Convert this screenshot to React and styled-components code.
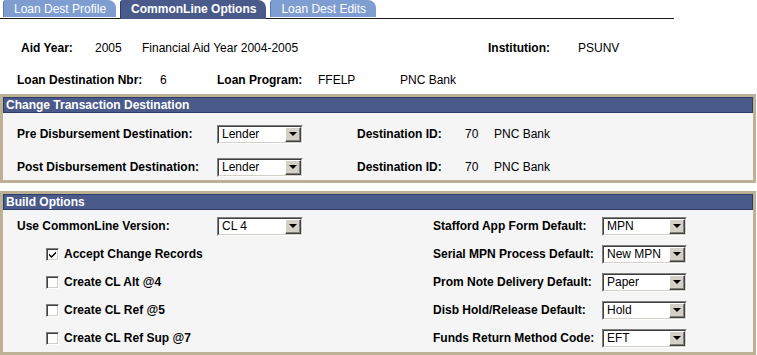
import React from "react";
import styled, { createGlobalStyle } from "styled-components";

const Global = createGlobalStyle`
  html, body { margin: 0; padding: 0; background: #fff; }
  body { font-family: "Liberation Sans", Arial, sans-serif; font-size: 12px; color: #000; }
`;

const Page = styled.div`
  width: 757px;
  height: 355px;
  overflow: hidden;
  display: flex;
  flex-direction: column;
`;

const TabBar = styled.div`
  display: flex;
  align-items: flex-end;
  gap: 4px;
  width: 674px;
  height: 19px;
  padding-left: 3px;
  box-sizing: border-box;
  border-bottom: 1px solid #1a1a1a;
`;

const Tab = styled.div`
  height: ${(p) => (p.$active ? "19px" : "17px")};
  margin-bottom: ${(p) => (p.$active ? "-1px" : "1px")};
  padding: 0 10px;
  display: flex;
  align-items: center;
  box-sizing: border-box;
  border-radius: 3px 8px 0 0;
  border-left: 1px solid ${(p) => (p.$active ? "#2f3d6c" : "#5f7cae")};
  background: ${(p) => (p.$active ? "#4a5a8b" : "#7e9dd0")};
  color: #fff;
  font-weight: ${(p) => (p.$active ? "bold" : "normal")};
  white-space: nowrap;
  padding-bottom: ${(p) => (p.$active ? "2px" : "0")};
`;

const Info = styled.div`
  display: flex;
  flex-direction: column;
  gap: 12px;
  margin-top: 19px;
`;

const InfoRow = styled.div`
  display: flex;
  height: 20px;
  align-items: center;
  padding-left: ${(p) => p.$pad}px;
`;

const Cell = styled.div`
  flex: none;
  width: ${(p) => (p.$w ? `${p.$w}px` : "auto")};
  font-weight: ${(p) => (p.$label ? "bold" : "normal")};
  white-space: nowrap;
`;

const Group = styled.section`
  margin-top: ${(p) => p.$top}px;
  width: 756px;
  box-sizing: border-box;
  border: 3px solid #bcb192;
  background: #f5f5f5;
`;

const GroupHeader = styled.div`
  height: 16px;
  box-sizing: border-box;
  background: #4a5a8b;
  border: 1px solid #2d3b68;
  color: #fff;
  font-weight: bold;
  line-height: 14px;
  padding-left: 2px;
`;

const GroupBody = styled.div`
  display: flex;
  flex-direction: column;
  gap: ${(p) => p.$gap}px;
  padding: ${(p) => p.$pt}px 0 ${(p) => p.$pb}px 14px;
`;

const Row = styled.div`
  display: flex;
  align-items: center;
  height: 20px;
`;

const Columns = styled.div`
  display: flex;
  padding: 6px 0 4px 14px;
`;

const Column = styled.div`
  display: flex;
  flex-direction: column;
  gap: 8px;
  width: ${(p) => (p.$w ? `${p.$w}px` : "auto")};
`;

const SelectBox = styled.div`
  flex: none;
  width: ${(p) => p.$w}px;
  height: 19px;
  box-sizing: border-box;
  border-top: 1px solid #808080;
  border-left: 1px solid #808080;
  border-right: 1px solid #ffffff;
  border-bottom: 1px solid #ffffff;
  display: flex;
`;

const SelectInner = styled.div`
  flex: 1;
  display: flex;
  align-items: center;
  border-top: 1px solid #404040;
  border-left: 1px solid #404040;
  border-right: 1px solid #d4d0c8;
  border-bottom: 1px solid #d4d0c8;
  background: #fff;
  padding-left: 3px;
`;

const SelectText = styled.span`
  flex: 1;
  white-space: nowrap;
`;

const DropBtn = styled.div`
  width: 16px;
  height: 15px;
  box-sizing: border-box;
  background: #d4d0c8;
  border-top: 1px solid #ffffff;
  border-left: 1px solid #ffffff;
  border-right: 1px solid #404040;
  border-bottom: 1px solid #404040;
  display: flex;
  align-items: center;
  justify-content: center;
  box-shadow: inset -1px -1px 0 #808080;
`;

const Arrow = styled.div`
  width: 0;
  height: 0;
  border-left: 4px solid transparent;
  border-right: 4px solid transparent;
  border-top: 4px solid #000;
  margin: 0 1px 1px 0;
`;

const CheckLine = styled.label`
  display: flex;
  align-items: center;
  height: 20px;
  padding-left: ${(p) => p.$indent}px;
  font-weight: bold;
  white-space: nowrap;
`;

const CheckBox = styled.span`
  width: 13px;
  height: 13px;
  box-sizing: border-box;
  border-top: 1px solid #808080;
  border-left: 1px solid #808080;
  border-right: 1px solid #fff;
  border-bottom: 1px solid #fff;
  box-shadow: inset 1px 1px 0 #404040, inset -1px -1px 0 #d4d0c8;
  background: #fff;
  margin-right: 5px;
  display: flex;
  align-items: center;
  justify-content: center;
`;

function Select({ value, w = 86 }) {
  return (
    <SelectBox $w={w}>
      <SelectInner>
        <SelectText>{value}</SelectText>
        <DropBtn>
          <Arrow />
        </DropBtn>
      </SelectInner>
    </SelectBox>
  );
}

function Check({ label, checked }) {
  return (
    <CheckLine $indent={29}>
      <CheckBox>
        {checked && (
          <svg width="9" height="9" viewBox="0 0 9 9">
            <path d="M1 3.5 L3.5 6 L8 1.5 L8 3.5 L3.5 8 L1 5.5 Z" fill="#000" />
          </svg>
        )}
      </CheckBox>
      {label}
    </CheckLine>
  );
}

export default function App() {
  return (
    <Page>
      <Global />
      <TabBar>
        <Tab>Loan Dest Profile</Tab>
        <Tab $active>CommonLine Options</Tab>
        <Tab>Loan Dest Edits</Tab>
      </TabBar>

      <Info>
        <InfoRow $pad={21}>
          <Cell $label $w={74}>Aid Year:</Cell>
          <Cell $w={47}>2005</Cell>
          <Cell $w={346}>Financial Aid Year 2004-2005</Cell>
          <Cell $label $w={90}>Institution:</Cell>
          <Cell>PSUNV</Cell>
        </InfoRow>
        <InfoRow $pad={17}>
          <Cell $label $w={143}>Loan Destination Nbr:</Cell>
          <Cell $w={57}>6</Cell>
          <Cell $label $w={101}>Loan Program:</Cell>
          <Cell $w={82}>FFELP</Cell>
          <Cell>PNC Bank</Cell>
        </InfoRow>
      </Info>

      <Group $top={4}>
        <GroupHeader>Change Transaction Destination</GroupHeader>
        <GroupBody $gap={13} $pt={11} $pb={3}>
          <Row>
            <Cell $label $w={200}>Pre Disbursement Destination:</Cell>
            <Select value="Lender" />
            <Cell $w={54} />
            <Cell $label $w={108}>Destination ID:</Cell>
            <Cell $w={29}>70</Cell>
            <Cell>PNC Bank</Cell>
          </Row>
          <Row>
            <Cell $label $w={200}>Post Disbursement Destination:</Cell>
            <Select value="Lender" />
            <Cell $w={54} />
            <Cell $label $w={108}>Destination ID:</Cell>
            <Cell $w={29}>70</Cell>
            <Cell>PNC Bank</Cell>
          </Row>
        </GroupBody>
      </Group>

      <Group $top={8}>
        <GroupHeader>Build Options</GroupHeader>
        <Columns>
          <Column $w={416}>
            <Row>
              <Cell $label $w={200}>Use CommonLine Version:</Cell>
              <Select value="CL 4" />
            </Row>
            <Check label="Accept Change Records" checked />
            <Check label="Create CL Alt @4" />
            <Check label="Create CL Ref @5" />
            <Check label="Create CL Ref Sup @7" />
          </Column>
          <Column>
            <Row>
              <Cell $label $w={169}>Stafford App Form Default:</Cell>
              <Select value="MPN" w={85} />
            </Row>
            <Row>
              <Cell $label $w={169}>Serial MPN Process Default:</Cell>
              <Select value="New MPN" w={85} />
            </Row>
            <Row>
              <Cell $label $w={169}>Prom Note Delivery Default:</Cell>
              <Select value="Paper" w={85} />
            </Row>
            <Row>
              <Cell $label $w={169}>Disb Hold/Release Default:</Cell>
              <Select value="Hold" w={85} />
            </Row>
            <Row>
              <Cell $label $w={169}>Funds Return Method Code:</Cell>
              <Select value="EFT" w={85} />
            </Row>
          </Column>
        </Columns>
      </Group>
    </Page>
  );
}
